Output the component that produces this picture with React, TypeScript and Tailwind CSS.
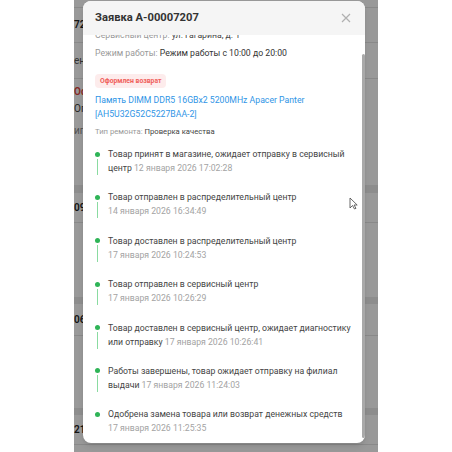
type TimelineStep = {
  text: string;
  date: string;
};

const steps: TimelineStep[] = [
  { text: 'Товар принят в магазине, ожидает отправку в сервисный центр', date: '12 января 2026 17:02:28' },
  { text: 'Товар отправлен в распределительный центр', date: '14 января 2026 16:34:49' },
  { text: 'Товар доставлен в распределительный центр', date: '17 января 2026 10:24:53' },
  { text: 'Товар отправлен в сервисный центр', date: '17 января 2026 10:26:29' },
  { text: 'Товар доставлен в сервисный центр, ожидает диагностику или отправку', date: '17 января 2026 10:26:41' },
  { text: 'Работы завершены, товар ожидает отправку на филиал выдачи', date: '17 января 2026 11:24:03' },
  { text: 'Одобрена замена товара или возврат денежных средств', date: '17 января 2026 11:25:35' },
];

function BackgroundList() {
  return (
    <div className="flex flex-col text-[10px] leading-[14px] text-[#222]">
      <div className="h-[8px] border-b border-[#e4e4e4]" />
      <div className="h-[35px] flex items-center border-b border-[#e4e4e4] font-semibold">72</div>
      <div className="h-[36px] flex items-center border-b border-[#e4e4e4] text-[#555]">ен</div>
      <div className="h-[106px] flex flex-col pt-[6px] gap-[3px]">
        <span className="text-[#e0443c] font-semibold">Оф</span>
        <span className="text-[#444]">Оп</span>
        <span className="text-[#888] pt-[5px]">ип</span>
      </div>
      <div className="h-[8px] bg-[#ececec]" />
      <div className="h-[30px] flex items-center border-b border-[#e4e4e4] font-semibold">09</div>
      <div className="h-[74px]" />
      <div className="h-[7px] bg-[#ececec]" />
      <div className="h-[32px] flex items-center border-b border-[#e4e4e4] font-semibold">06</div>
      <div className="h-[72px]" />
      <div className="h-[7px] bg-[#ececec]" />
      <div className="h-[30px] flex items-center border-b border-[#e4e4e4] font-semibold">21</div>
      <div className="h-[20px]" />
    </div>
  );
}

function Timeline() {
  return (
    <div className="flex flex-col">
      {steps.map((step, i) => (
        <div key={i} className={i < steps.length - 1 ? 'flex pb-[15.4px]' : 'flex'}>
          <div className="flex flex-col items-center w-[5px] mr-[8px] shrink-0">
            <div className="mt-[4.5px] w-[5px] h-[5px] rounded-full bg-[#2fb457]" />
            {i < steps.length - 1 && <div className="mt-[2px] w-px flex-1 bg-[#8adba1]" />}
          </div>
          <p className="text-[#444]">
            {step.text} <span className="whitespace-nowrap text-[#a3a3a3]">{step.date}</span>
          </p>
        </div>
      ))}
    </div>
  );
}

export default function App() {
  return (
    <div className="min-h-[452px] bg-white" style={{ fontFamily: 'Roboto, "Noto Sans", sans-serif' }}>
      <div className="relative mx-auto w-[304px] h-[452px] overflow-hidden bg-white">
        <BackgroundList />

        <div className="absolute inset-0 bg-black/40 pt-[1px] pl-[9px]">
          <div className="relative w-[282px] h-[442px] rounded-lg bg-white overflow-hidden flex flex-col shadow-md">
            <div className="h-[34px] shrink-0 bg-[#f5f5f5] flex items-center justify-between pl-[12px] pr-[14px]">
              <h2 className="text-[11.2px] font-bold text-[#333]">Заявка А-00007207</h2>
              <svg width="10" height="10" viewBox="0 0 10 10" className="text-[#b0b0b0]">
                <path d="M1 1L9 9M9 1L1 9" stroke="currentColor" strokeWidth="1.2" fill="none" />
              </svg>
            </div>

            <div className="flex-1 overflow-hidden pl-[12px] pr-[10px] text-[8.7px] leading-[14px]">
              <div className="-mt-[7px] flex flex-col">
                <p className="text-[#999]">
                  Сервисный центр: <span className="text-[#444]">ул. Гагарина, д. 1</span>
                </p>
                <p className="mt-[4px] text-[#999]">
                  Режим работы: <span className="text-[#333]">Режим работы с 10:00 до 20:00</span>
                </p>
                <div className="mt-[14px] self-start h-[14px] px-[5px] flex items-center rounded-sm bg-[#fdecec] text-[6.8px] font-bold text-[#f0605a]">
                  Оформлен возврат
                </div>
                <p className="mt-[5px] text-[#2f95e6]">
                  Память DIMM DDR5 16GBx2 5200MHz Apacer Panter <br />
                  [AH5U32G52C5227BAA-2]
                </p>
                <p className="mt-[5px] text-[7.7px] leading-[12px] text-[#999]">
                  Тип ремонта: <span className="text-[#444]">Проверка качества</span>
                </p>
                <div className="mt-[9px]">
                  <Timeline />
                </div>
              </div>
            </div>

            <div className="absolute right-0 top-[53px] w-[3px] h-[384px] rounded-sm bg-[#a9a9a9]" />
          </div>
        </div>

        <svg width="9" height="13" viewBox="0 0 9 13" className="absolute left-[275px] top-[197px]">
          <path d="M1 1V11L3.5 8.5L5.5 12L7 11.3L5 8H8.2Z" fill="white" stroke="#444" strokeWidth="0.8" strokeLinejoin="round" />
        </svg>
      </div>
    </div>
  );
}
